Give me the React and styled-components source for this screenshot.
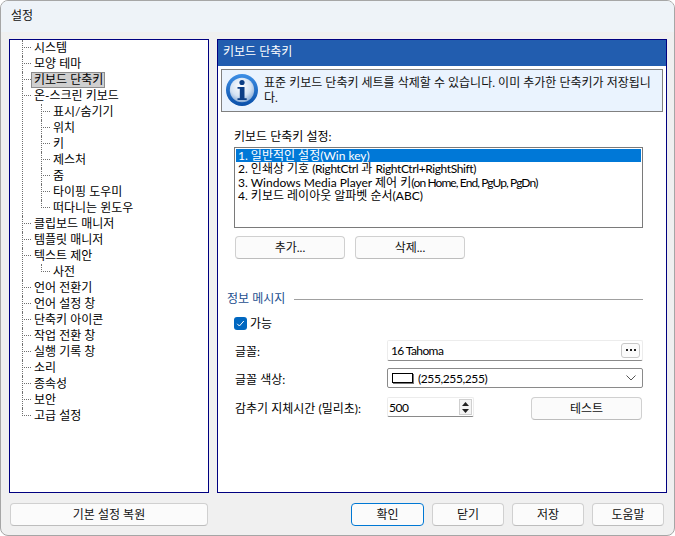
import React from "react";
import styled, { createGlobalStyle } from "styled-components";

const Global = createGlobalStyle`
  html, body { margin: 0; padding: 0; background: #fff; }
  * { box-sizing: border-box; }
`;

const font = `Lato, "Noto Sans CJK KR", sans-serif`;

const Window = styled.div`
  width: 675px;
  height: 536px;
  background: #f0f0f0;
  border: 1px solid #a6a6a6;
  border-radius: 8px;
  overflow: hidden;
  display: flex;
  flex-direction: column;
  font-family: ${font};
  font-size: 12px;
  color: #000;
`;
const TitleBar = styled.div`
  height: 31px;
  flex: none;
  background: #eef3f8;
  padding: 0 0 0 10px;
  line-height: 29px;
  font-size: 12px;
  color: #111;
`;
const Main = styled.div`
  display: flex;
  gap: 8px;
  padding: 7px 7px 0 8px;
  height: 461px;
  flex: none;
`;
const TreePanel = styled.div`
  width: 200px;
  flex: none;
  background: #fff;
  border: 1px solid #000080;
  padding: 0 0 0 12px;
`;
const TreeList = styled.ul`
  list-style: none;
  margin: 0;
  padding: 0 0 0 ${(p) => (p.$nested ? 10 : 0)}px;
`;
const TreeItem = styled.li`
  position: relative;
  padding-left: 9px;
  &::before {
    content: "";
    position: absolute;
    left: 0;
    top: 7px;
    width: 9px;
    border-top: 1px dotted #707070;
  }
  &::after {
    content: "";
    position: absolute;
    left: 0;
    top: 0;
    bottom: 0;
    border-left: 1px dotted #707070;
  }
  &:last-child::after {
    bottom: auto;
    height: 8px;
  }
`;
const TreeLabel = styled.div`
  height: 16px;
  line-height: 15px;
  width: fit-content;
  white-space: nowrap;
  padding: 0 2px 0 3px;
  background: ${(p) => (p.$selected ? "#cfcfcf" : "transparent")};
  outline: ${(p) => (p.$selected ? "1px solid #8c8c8c" : "none")};
  outline-offset: -1px;
`;

const RightPanel = styled.div`
  width: 450px;
  flex: none;
  background: #fff;
  border: 1px solid #000080;
  display: flex;
  flex-direction: column;
`;
const Header = styled.div`
  height: 26px;
  flex: none;
  background: #225daf;
  color: #fff;
  line-height: 24px;
  padding-left: 5px;
  font-size: 12px;
`;
const InfoBox = styled.div`
  margin: 3px 3px 0 3px;
  height: 43px;
  flex: none;
  background: #eaf3fe;
  border: 1px solid #808080;
  display: flex;
  align-items: flex-start;
  gap: 6px;
  padding: 4px 4px 0 4px;
`;
const InfoText = styled.div`
  flex: 1;
  line-height: 15px;
  padding-top: 1px;
  color: #111;
  white-space: nowrap;
`;
const ListSection = styled.div`
  padding: 17px 23px 0 16px;
`;
const SectionLabel = styled.div`
  line-height: 16px;
  height: 16px;
`;
const ListBox = styled.div`
  height: 81px;
  margin-top: 2px;
  background: #fff;
  border: 1px solid #7a7a7a;
  padding: 1px;
`;
const ListRow = styled.div`
  height: 13.4px;
  line-height: 13.4px;
  padding-left: 2px;
  white-space: nowrap;
  overflow: hidden;
  background: ${(p) => (p.$active ? "#0078d7" : "transparent")};
  color: ${(p) => (p.$active ? "#fff" : "#000")};
`;
const Latin = styled.span`
  letter-spacing: ${(p) => p.$track || -0.4}px;
`;
const ButtonRow = styled.div`
  display: flex;
  gap: 10px;
  margin: 8px 0 0 1px;
`;
const Button = styled.button`
  width: ${(p) => p.$w || 110}px;
  height: 23px;
  padding: 0 0 2px;
  background: #fbfbfb;
  border: 1px solid ${(p) => (p.$primary ? "#0078d4" : "#d0d0d0")};
  border-bottom-color: ${(p) => (p.$primary ? "#0078d4" : "#bdbdbd")};
  border-radius: 4px;
  font-family: ${font};
  font-size: 12px;
  color: #111;
  flex: none;
`;
const GroupTitle = styled.div`
  display: flex;
  align-items: center;
  gap: 9px;
  margin: 31px 23px 0 9px;
  height: 16px;
  line-height: 15px;
  color: #1e4f8f;
  white-space: nowrap;
  &::after {
    content: "";
    flex: 1;
    height: 1px;
    margin-top: 2px;
    background: #a0a0a0;
  }
`;
const CheckRow = styled.div`
  display: flex;
  align-items: center;
  gap: 3px;
  margin: 10px 0 0 16px;
  height: 14px;
  line-height: 13px;
`;
const CheckBox = styled.span`
  width: 13px;
  height: 13px;
  background: #0067c0;
  border-radius: 3px;
  display: flex;
  align-items: center;
  justify-content: center;
`;
const FormRow = styled.div`
  display: flex;
  align-items: center;
  height: ${(p) => p.$h || 20}px;
  margin: ${(p) => p.$mt || 0}px 23px 0 17px;
`;
const FieldLabel = styled.div`
  width: 152px;
  flex: none;
  white-space: nowrap;
`;
const FontField = styled.div`
  width: 256px;
  height: 21px;
  background: #fff;
  border: 1px solid #ececec;
  border-bottom-color: #8a8a8a;
  border-radius: 2px;
  display: flex;
  align-items: center;
  justify-content: space-between;
  padding: 0 2px 0 3px;
`;
const FieldText = styled(Latin)`
  padding-top: 1px;
`;
const DotsButton = styled.div`
  width: 19px;
  height: 15px;
  background: #fbfbfb;
  border: 1px solid #c8c8c8;
  border-radius: 3px;
  display: flex;
  align-items: center;
  justify-content: center;
  gap: 2px;
`;
const Dot = styled.span`
  width: 2px;
  height: 2px;
  background: #222;
`;
const Combo = styled.div`
  width: 256px;
  height: 20px;
  background: #fff;
  border: 1px solid #8a8a8a;
  border-radius: 2px;
  display: flex;
  align-items: center;
  padding: 0 6px 0 4px;
  gap: 5px;
`;
const Swatch = styled.span`
  width: 21px;
  height: 10px;
  background: #fff;
  border: 1px solid #000;
  box-shadow: 1px 1px 0 #777;
  flex: none;
`;
const ComboText = styled(Latin)`
  flex: 1;
`;
const SpinField = styled.div`
  width: 87px;
  height: 20px;
  background: #fff;
  border: 1px solid #ececec;
  border-bottom-color: #8a8a8a;
  border-radius: 2px;
  display: flex;
  align-items: center;
  justify-content: space-between;
  padding: 0 1px 0 1px;
`;
const Spin = styled.div`
  width: 13px;
  height: 16px;
  display: flex;
  flex-direction: column;
  border: 1px solid #cfcfcf;
  background: #f4f4f4;
`;
const SpinPart = styled.div`
  flex: 1;
  display: flex;
  align-items: center;
  justify-content: center;
`;
const TestButton = styled(Button)`
  margin-left: 57px;
  align-self: flex-start;
`;
const Footer = styled.div`
  display: flex;
  align-items: center;
  padding: 10px 10px 0 9px;
  gap: 8px;
`;
const FooterSpacer = styled.div`
  flex: 1;
`;

const InfoIcon = () => (
  <svg width="32" height="32" viewBox="0 0 32 32" style={{ flex: "none" }}>
    <defs>
      <radialGradient id="inner" cx="45%" cy="35%" r="75%">
        <stop offset="0" stopColor="#ffffff" />
        <stop offset="0.55" stopColor="#d5e3f3" />
        <stop offset="1" stopColor="#6f98cb" />
      </radialGradient>
      <linearGradient id="ring" x1="0" y1="0" x2="0" y2="1">
        <stop offset="0" stopColor="#3d8fe6" />
        <stop offset="1" stopColor="#0a4fa8" />
      </linearGradient>
    </defs>
    <circle cx="16" cy="16" r="16" fill="url(#ring)" />
    <circle cx="16" cy="16" r="12.2" fill="url(#inner)" />
    <circle cx="16" cy="8.5" r="2.6" fill="#0d3f86" />
    <path d="M11.5 13h7v11.2h2.2V26H11.5v-1.8h2.3V14.8h-2.3z" fill="#0d3f86" />
  </svg>
);

const tree = [
  { t: "시스템" },
  { t: "모양 테마" },
  { t: "키보드 단축키", s: true },
  {
    t: "온-스크린 키보드",
    c: ["표시/숨기기", "위치", "키", "제스처", "줌", "타이핑 도우미", "떠다니는 윈도우"],
  },
  { t: "클립보드 매니저" },
  { t: "템플릿 매니저" },
  { t: "텍스트 제안", c: ["사전"] },
  { t: "언어 전환기" },
  { t: "언어 설정 창" },
  { t: "단축키 아이콘" },
  { t: "작업 전환 창" },
  { t: "실행 기록 창" },
  { t: "소리" },
  { t: "종속성" },
  { t: "보안" },
  { t: "고급 설정" },
];

export default function App() {
  return (
    <>
      <Global />
      <Window>
        <TitleBar>설정</TitleBar>
        <Main>
          <TreePanel>
            <TreeList>
              {tree.map((n) => (
                <TreeItem key={n.t}>
                  <TreeLabel $selected={n.s}>{n.t}</TreeLabel>
                  {n.c && (
                    <TreeList $nested>
                      {n.c.map((c) => (
                        <TreeItem key={c}>
                          <TreeLabel>{c}</TreeLabel>
                        </TreeItem>
                      ))}
                    </TreeList>
                  )}
                </TreeItem>
              ))}
            </TreeList>
          </TreePanel>
          <RightPanel>
            <Header>키보드 단축키</Header>
            <InfoBox>
              <InfoIcon />
              <InfoText>
                표준 키보드 단축키 세트를 삭제할 수 있습니다. 이미 추가한 단축키가 저장됩니
                <br />
                다.
              </InfoText>
            </InfoBox>
            <ListSection>
              <SectionLabel>키보드 단축키 설정:</SectionLabel>
              <ListBox>
                <ListRow $active>1. 일반적인 설정(Win key)</ListRow>
                <ListRow>
                  2. 인쇄상 기호 <Latin>(RightCtrl</Latin> 과 <Latin>RightCtrl+RightShift)</Latin>
                </ListRow>
                <ListRow>
                  3. Windows Media Player 제어 키<Latin $track={-0.9}>(on Home, End, PgUp, PgDn)</Latin>
                </ListRow>
                <ListRow>4. 키보드 레이아웃 알파벳 순서(ABC)</ListRow>
              </ListBox>
              <ButtonRow>
                <Button>추가...</Button>
                <Button>삭제...</Button>
              </ButtonRow>
            </ListSection>
            <GroupTitle>정보 메시지</GroupTitle>
            <CheckRow>
              <CheckBox>
                <svg width="9" height="9" viewBox="0 0 9 9">
                  <path d="M1.2 4.8 3.4 7l4.4-5" fill="none" stroke="#fff" strokeWidth="1" />
                </svg>
              </CheckBox>
              가능
            </CheckRow>
            <FormRow $mt={10}>
              <FieldLabel>글꼴:</FieldLabel>
              <FontField>
                <FieldText $track={-0.6}>16 Tahoma</FieldText>
                <DotsButton>
                  <Dot />
                  <Dot />
                  <Dot />
                </DotsButton>
              </FontField>
            </FormRow>
            <FormRow $mt={8}>
              <FieldLabel>글꼴 색상:</FieldLabel>
              <Combo>
                <Swatch />
                <ComboText>(255,255,255)</ComboText>
                <svg width="10" height="6" viewBox="0 0 10 6">
                  <path d="M.5.5 5 5 9.5.5" fill="none" stroke="#555" />
                </svg>
              </Combo>
            </FormRow>
            <FormRow $mt={9}>
              <FieldLabel>감추기 지체시간 (밀리초):</FieldLabel>
              <SpinField>
                <Latin>500</Latin>
                <Spin>
                  <SpinPart>
                    <svg width="7" height="4" viewBox="0 0 7 4">
                      <path d="M3.5 0 7 4H0z" fill="#222" />
                    </svg>
                  </SpinPart>
                  <SpinPart>
                    <svg width="7" height="4" viewBox="0 0 7 4">
                      <path d="M3.5 4 7 0H0z" fill="#222" />
                    </svg>
                  </SpinPart>
                </Spin>
              </SpinField>
              <TestButton $w={111}>테스트</TestButton>
            </FormRow>
          </RightPanel>
        </Main>
        <Footer>
          <Button $w={198}>기본 설정 복원</Button>
          <FooterSpacer />
          <Button $w={73} $primary>확인</Button>
          <Button $w={72}>닫기</Button>
          <Button $w={72}>저장</Button>
          <Button $w={72}>도움말</Button>
        </Footer>
      </Window>
    </>
  );
}
